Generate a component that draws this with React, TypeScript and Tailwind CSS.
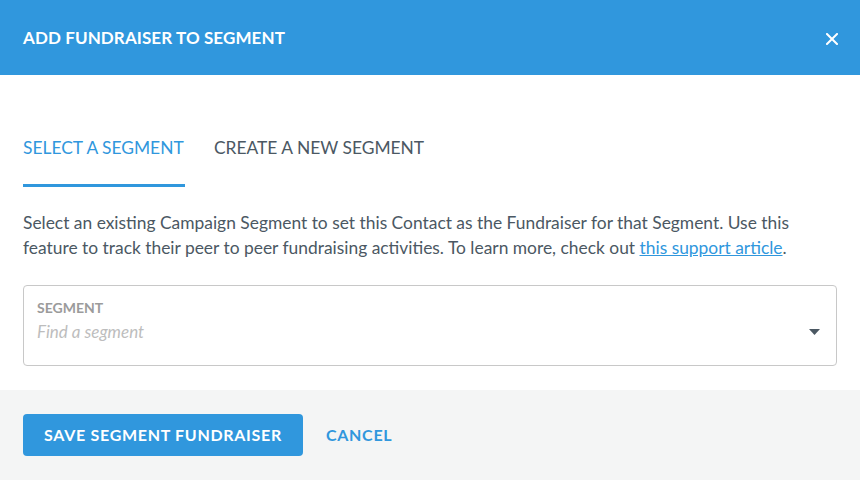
import React from "react";

export default function App() {
  return (
    <div className="w-[860px] h-[480px] bg-white flex flex-col overflow-hidden" style={{ fontFamily: "Lato, 'Open Sans', sans-serif" }}>
      <div className="h-[75px] bg-[#3097dd] flex items-center justify-between pl-[23px] pr-[22px] shrink-0">
        <div className="text-white text-[17px] font-bold tracking-[0.1px]">ADD FUNDRAISER TO SEGMENT</div>
        <svg width="12" height="12" viewBox="0 0 12 12" className="mt-[2px]">
          <path d="M1 1 L11 11 M11 1 L1 11" stroke="white" strokeWidth="2" strokeLinecap="square" />
        </svg>
      </div>
      <div className="flex-1 px-[23px] pt-[60px]">
        <div className="flex gap-[29px]">
          <div className="text-[17.4px] text-[#3097dd] pb-[23px] border-b-[3px] border-[#3097dd] w-[162px] leading-[26px]">SELECT A SEGMENT</div>
          <div className="text-[17.4px] text-[#4b5863] leading-[26px]">CREATE A NEW SEGMENT</div>
        </div>
        <p className="mt-[23px] text-[17.4px] leading-[25px] text-[#4b5863]">
          Select an existing Campaign Segment to set this Contact as the Fundraiser for that Segment. Use this feature to track their peer to peer fundraising activities. To learn more, check out{" "}
          <a className="text-[#3097dd] underline">this support article</a>.
        </p>
        <div className="mt-[25px] h-[81px] border border-[#c8c8c8] rounded-[4px] pl-[13px] pr-[16px] pt-[13px] flex justify-between">
          <div className="flex flex-col">
            <div className="text-[14px] font-bold text-[#9b9b9b] leading-[18px]">SEGMENT</div>
            <div className="text-[17px] italic text-[#bdbdbd] leading-[22px] mt-[4px]">Find a segment</div>
          </div>
          <svg width="11" height="6" viewBox="0 0 11 6" className="mt-[30px]">
            <path d="M0 0 L11 0 L5.5 6 Z" fill="#4b5863" />
          </svg>
        </div>
      </div>
      <div className="h-[90px] bg-[#f4f5f5] shrink-0 flex items-center px-[23px] gap-[23px]">
        <button className="h-[42px] w-[280px] bg-[#3097dd] rounded-[4px] text-white text-[16px] font-bold tracking-[0.7px]">SAVE SEGMENT FUNDRAISER</button>
        <button className="text-[#3097dd] text-[16px] font-bold tracking-[0.7px]">CANCEL</button>
      </div>
    </div>
  );
}
